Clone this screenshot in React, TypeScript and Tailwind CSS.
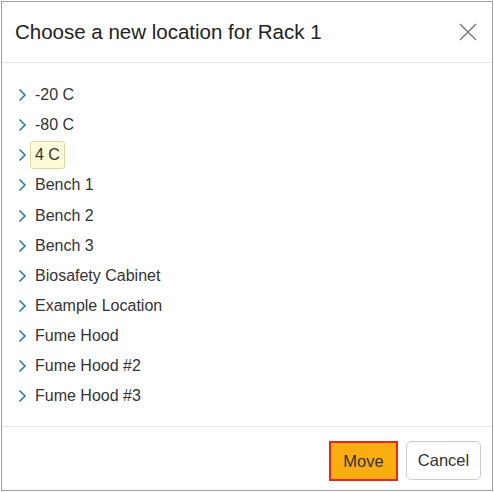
import React from "react";

const locations = [
  "-20 C",
  "-80 C",
  "4 C",
  "Bench 1",
  "Bench 2",
  "Bench 3",
  "Biosafety Cabinet",
  "Example Location",
  "Fume Hood",
  "Fume Hood #2",
  "Fume Hood #3",
];

function Chevron() {
  return (
    <svg width="9" height="14" viewBox="0 0 9 14" className="shrink-0">
      <path d="M1.5 1.5 L7 7 L1.5 12.5" fill="none" stroke="#2a7f9e" strokeWidth="1.6" />
    </svg>
  );
}

export default function App() {
  return (
    <div className="w-[494px] h-[492px] bg-white p-px font-['Liberation_Sans',Arial,sans-serif] text-[#333]">
      <div className="h-[490px] w-[492px] border border-[#a0a0a0] flex flex-col">
        {/* header */}
        <div className="h-[61px] flex items-center justify-between pl-[13px] pr-[12px] border-b border-[#e5e5e5]">
          <h1 className="text-[20.5px] leading-none text-[#222]">Choose a new location for Rack 1</h1>
          <button className="w-6 h-6 flex items-center justify-center">
            <svg width="18" height="18" viewBox="0 0 18 18">
              <path d="M1 1 L17 17 M17 1 L1 17" stroke="#777" strokeWidth="1.4" fill="none" />
            </svg>
          </button>
        </div>

        {/* tree */}
        <div className="flex-1 pt-[17px] pl-[16px]">
          {locations.map((name) => (
            <div key={name} className="h-[30.15px] flex items-center gap-[3px]">
              <Chevron />
              {name === "4 C" ? (
                <span className="text-[16px] px-[4px] h-[28px] leading-[26px] bg-[#fdfbd9] border border-[#dcd79c] rounded-[3px]">
                  {name}
                </span>
              ) : (
                <span className="text-[16px] px-[5px]">{name}</span>
              )}
            </div>
          ))}
        </div>

        {/* footer */}
        <div className="h-[64px] border-t border-[#e5e5e5] flex items-start justify-end gap-[8px] pr-[11px] pt-[14px]">
          <button className="h-[40px] w-[69px] bg-[#f9ad10] border-2 border-[#e8261c] text-[16.5px] text-[#333]">
            Move
          </button>
          <button className="h-[39px] w-[75px] bg-white border border-[#ccc] rounded-[5px] text-[16.5px] text-[#333]">
            Cancel
          </button>
        </div>
      </div>
    </div>
  );
}
